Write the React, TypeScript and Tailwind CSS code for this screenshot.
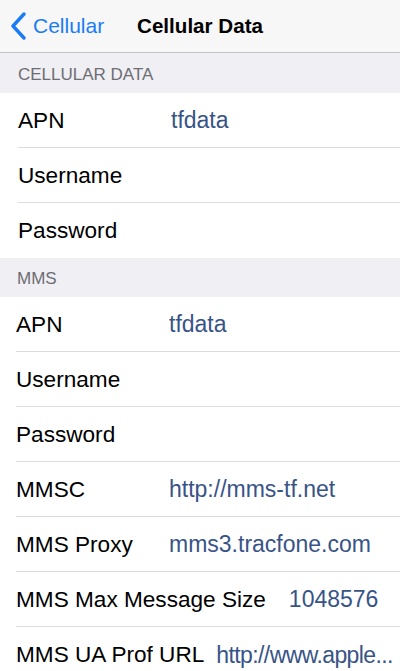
import React from 'react';

interface Row {
    label: string;
    value?: string;
    valueClass?: string;
}

const cellularRows: Row[] = [
    { label: 'APN', value: 'tfdata' },
    { label: 'Username' },
    { label: 'Password' },
];

const mmsRows: Row[] = [
    { label: 'APN', value: 'tfdata' },
    { label: 'Username' },
    { label: 'Password' },
    { label: 'MMSC', value: 'http://mms-tf.net' },
    { label: 'MMS Proxy', value: 'mms3.tracfone.com' },
    { label: 'MMS Max Message Size', value: '1048576', valueClass: 'ml-[23px]' },
    { label: 'MMS UA Prof URL', value: 'http://www.apple...', valueClass: 'ml-[12px] text-[20px] tracking-[-0.6px]' },
];

const SectionHeader: React.FC<{ title: string; className?: string }> = ({ title, className = '' }) => (
    <div className={`flex items-center bg-[#efeff4] pt-[3px] text-[17px] text-[#6d6d72] ${className}`}>
        {title}
    </div>
);

const Group: React.FC<{ rows: Row[]; inset: string }> = ({ rows, inset }) => (
    <div className={`bg-white ${inset}`}>
        {rows.map((row, i) => (
            <div
                key={row.label}
                className={`flex h-[55px] items-center whitespace-nowrap pt-[1px] ${i < rows.length - 1 ? 'border-b border-[#dcdce0]' : ''}`}
            >
                <span className="min-w-[153px] shrink-0 text-[22.6px] text-black">{row.label}</span>
                {row.value && (
                    <span className={`shrink-0 text-[23px] text-[#385487] ${row.valueClass ?? ''}`}>{row.value}</span>
                )}
            </div>
        ))}
    </div>
);

export default function App() {
    return (
        <div className="w-[400px] h-[671px] overflow-hidden bg-[#efeff4]" style={{ fontFamily: '"Liberation Sans", Arial, sans-serif' }}>
            {/* nav bar */}
            <div className="grid h-[53px] grid-cols-[1fr_auto_1fr] items-center border-b border-[#c4c4c8] bg-[#f7f7f7]">
                <div className="flex items-center pl-[9px] text-[21px] text-[#1a7cf5]">
                    <svg width="18" height="28" viewBox="0 0 18 28" className="mr-[6px]">
                        <path d="M15 2 L4 14 L15 26" fill="none" stroke="#1a7cf5" strokeWidth="3.4" strokeLinecap="round" strokeLinejoin="round" />
                    </svg>
                    <span>Cellular</span>
                </div>
                <div className="text-[20.6px] font-bold text-black">Cellular Data</div>
                <div />
            </div>

            <SectionHeader title="CELLULAR DATA" className="h-[40px] pl-[18px]" />
            <Group rows={cellularRows} inset="pl-[18px]" />

            <SectionHeader title="MMS" className="h-[39px] pl-[17px]" />
            <Group rows={mmsRows} inset="pl-[16px]" />
        </div>
    );
}
